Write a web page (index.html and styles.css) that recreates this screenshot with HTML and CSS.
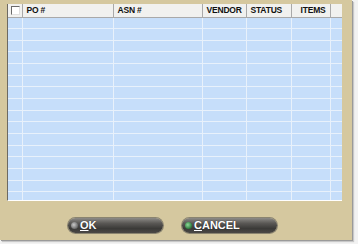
FILE: index.html
```html
<!DOCTYPE html>
<html>
<head>
<meta charset="utf-8">
<link rel="stylesheet" href="styles.css">
</head>
<body>
<div class="panel">
  <div class="grid-wrap">
    <table class="grid">
      <colgroup>
        <col class="c-chk"><col class="c-po"><col class="c-asn"><col class="c-vendor"><col class="c-status"><col class="c-items"><col class="c-fill">
      </colgroup>
      <thead>
        <tr>
          <th class="chk"><span class="box"></span></th>
          <th>PO #</th>
          <th>ASN #</th>
          <th>VENDOR</th>
          <th>STATUS</th>
          <th class="right">ITEMS</th>
          <th class="fill"></th>
        </tr>
      </thead>
      <tbody>
        <tr><td></td><td></td><td></td><td></td><td></td><td></td><td></td></tr>
        <tr><td></td><td></td><td></td><td></td><td></td><td></td><td></td></tr>
        <tr><td></td><td></td><td></td><td></td><td></td><td></td><td></td></tr>
        <tr><td></td><td></td><td></td><td></td><td></td><td></td><td></td></tr>
        <tr><td></td><td></td><td></td><td></td><td></td><td></td><td></td></tr>
        <tr><td></td><td></td><td></td><td></td><td></td><td></td><td></td></tr>
        <tr><td></td><td></td><td></td><td></td><td></td><td></td><td></td></tr>
        <tr><td></td><td></td><td></td><td></td><td></td><td></td><td></td></tr>
        <tr><td></td><td></td><td></td><td></td><td></td><td></td><td></td></tr>
        <tr><td></td><td></td><td></td><td></td><td></td><td></td><td></td></tr>
        <tr><td></td><td></td><td></td><td></td><td></td><td></td><td></td></tr>
        <tr><td></td><td></td><td></td><td></td><td></td><td></td><td></td></tr>
        <tr><td></td><td></td><td></td><td></td><td></td><td></td><td></td></tr>
        <tr><td></td><td></td><td></td><td></td><td></td><td></td><td></td></tr>
        <tr><td></td><td></td><td></td><td></td><td></td><td></td><td></td></tr>
        <tr><td></td><td></td><td></td><td></td><td></td><td></td><td></td></tr>
        <tr><td></td><td></td><td></td><td></td><td></td><td></td><td></td></tr>
      </tbody>
    </table>
  </div>
  <div class="buttons">
    <button class="btn"><span class="dot"></span><span class="label"><u>O</u>K</span></button>
    <button class="btn"><span class="dot green"></span><span class="label"><u>C</u>ANCEL</span></button>
  </div>
</div>
</body>
</html>
```
FILE: styles.css
```css
html, body {
  margin: 0;
  padding: 0;
  background: #f2f2f2;
  width: 358px;
  height: 244px;
  overflow: hidden;
}
.panel {
  width: 352px;
  height: 240px;
  background: #d5c89f;
  box-shadow: 1px 1px 0 #9a9a9a, 2px 2px 1px #c8c8c8;
  padding: 4px 0 0 7px;
  box-sizing: border-box;
  display: flex;
  flex-direction: column;
}
.grid-wrap {
  width: 335px;
  height: 197px;
  overflow: hidden;
  border-left: 1px solid #6d6a63;
  border-bottom: 1px solid #ffffff;
  background: #c6defa;
  box-sizing: border-box;
}
.grid {
  border-collapse: collapse;
  table-layout: fixed;
  width: 334px;
  font-family: "Liberation Sans", Arial, sans-serif;
}
.c-chk { width: 14px; }
.c-po { width: 91px; }
.c-asn { width: 89px; }
.c-vendor { width: 44px; }
.c-status { width: 45px; }
.c-items { width: 39px; }
.c-fill { width: 12px; }
.grid th {
  height: 13px;
  padding: 0 0 0 4px;
  background: #f1f1ef;
  border-right: 1px solid #a9a9a9;
  border-bottom: 1px solid #a9a9a9;
  font-size: 8.5px;
  font-weight: bold;
  color: #111111;
  text-align: left;
  white-space: nowrap;
  letter-spacing: -0.2px;
  box-sizing: border-box;
}
.grid th.right { text-align: right; padding: 0 4px 0 0; }
.grid th.fill { border-right: none; }
.grid th.chk { padding: 0 0 0 3px; }
.box {
  display: block;
  width: 9px;
  height: 9px;
  background: #fff;
  border-top: 1px solid #6a6a6a;
  border-left: 1px solid #6a6a6a;
  border-right: 1px solid #e0e0e0;
  border-bottom: 1px solid #e0e0e0;
  box-sizing: border-box;
}
.grid td {
  height: 11.67px;
  padding: 0;
  background: #c6defa;
  border-right: 1px solid #e8f1fb;
  border-bottom: 1px solid #e8f1fb;
  box-sizing: border-box;
}
.grid td:last-child { border-right: none; }
.buttons {
  display: flex;
  gap: 19px;
  padding: 17px 0 0 61px;
}
.btn {
  width: 95px;
  height: 15px;
  border: none;
  border-radius: 8px;
  background: linear-gradient(#8d8b87 0%, #5a5855 35%, #3b3a38 70%, #4a4845 100%);
  box-shadow: 0 0 0 1px #8a8470;
  display: flex;
  align-items: center;
  padding: 0 0 0 3px;
  margin: 0;
  gap: 2px;
  cursor: pointer;
}
.dot {
  width: 7px;
  height: 7px;
  border-radius: 50%;
  background: radial-gradient(circle at 40% 40%, #c9c9c9, #6a6a6a 70%);
  flex: none;
}
.dot.green {
  background: radial-gradient(circle at 40% 40%, #8fd89a, #2c7a3b 70%);
}
.label {
  font-family: "Liberation Sans", Arial, sans-serif;
  font-size: 11px;
  font-weight: bold;
  color: #ffffff;
  line-height: 15px;
  text-shadow: 0 0 1px #222;
}
```
